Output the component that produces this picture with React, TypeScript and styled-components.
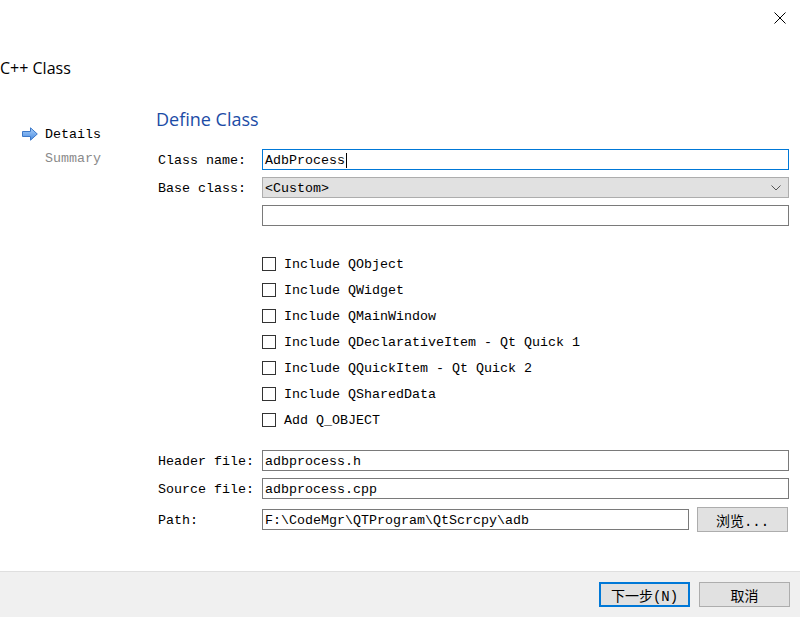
import React from "react";
import styled, { createGlobalStyle } from "styled-components";

const GlobalStyle = createGlobalStyle`
  html, body {
    margin: 0;
    padding: 0;
    background: #ffffff;
  }
  * {
    box-sizing: border-box;
  }
`;

const mono = `"Liberation Mono", "Noto Sans CJK SC", monospace`;
const ui = `"Open Sans", "Noto Sans", "Noto Sans CJK SC", sans-serif`;

const Window = styled.div`
  width: 800px;
  height: 617px;
  display: flex;
  flex-direction: column;
  background: #ffffff;
  overflow: hidden;
  font-family: ${mono};
  font-size: 13.33px;
  color: #000;
`;

const TopBar = styled.div`
  height: 36px;
  display: flex;
  justify-content: flex-end;
`;

const CloseButton = styled.div`
  width: 41px;
  height: 36px;
  display: flex;
  align-items: center;
  justify-content: center;
`;

const WizardTitle = styled.div`
  height: 64px;
  line-height: 64px;
  font-family: ${ui};
  font-size: 16px;
  color: #000;
`;

const Body = styled.div`
  flex: 1;
  display: flex;
`;

const Sidebar = styled.div`
  width: 156px;
  padding-top: 22px;
  display: flex;
  flex-direction: column;
`;

const NavItem = styled.div<{ $active?: boolean }>`
  height: 24px;
  display: flex;
  align-items: center;
  padding-left: ${(p) => (p.$active ? "22px" : "45px")};
  gap: 7px;
  color: ${(p) => (p.$active ? "#000" : "#8a8a8a")};
`;

const Page = styled.div`
  flex: 1;
  padding-top: 7px;
  padding-right: 11px;
  display: flex;
  flex-direction: column;
`;

const PageTitle = styled.div`
  height: 24px;
  line-height: 24px;
  font-family: ${ui};
  font-size: 18px;
  color: #1c4ca6;
`;

const FormGrid = styled.div<{ $top: number }>`
  margin-top: ${(p) => p.$top}px;
  display: grid;
  grid-template-columns: 106px 1fr;
  row-gap: 7px;
  align-items: center;
`;

const Label = styled.div`
  padding: 2px 0 0 2px;
  white-space: pre;
`;

const TextBox = styled.div<{ $focused?: boolean }>`
  height: 21px;
  display: flex;
  align-items: center;
  padding: 1px 0 0 2px;
  border: 1px solid ${(p) => (p.$focused ? "#0078d7" : "#7a7a7a")};
  background: #fff;
  white-space: pre;
`;

const Caret = styled.span`
  display: inline-block;
  width: 1px;
  height: 15px;
  background: #000;
  margin-left: 1px;
`;

const ComboBox = styled.div`
  height: 21px;
  display: flex;
  align-items: center;
  justify-content: space-between;
  padding: 1px 7px 0 2px;
  border: 1px solid #adadad;
  background: #e1e1e1;
`;

const PathRow = styled.div`
  display: flex;
  align-items: center;
  gap: 8px;
  margin-top: 1px;
  height: 25px;
  margin-right: 1px;
`;

const PathBox = styled(TextBox)`
  flex: 1;
`;

const Button = styled.div<{ $default?: boolean }>`
  width: 91px;
  height: 25px;
  display: flex;
  align-items: center;
  justify-content: center;
  background: #e1e1e1;
  border: ${(p) => (p.$default ? "2px solid #0078d7" : "1px solid #adadad")};
  font-size: 14px;
  white-space: pre;
`;

const CheckList = styled.div`
  margin-top: 25px;
  padding-left: 106px;
  display: flex;
  flex-direction: column;
`;

const CheckRow = styled.div`
  height: 26px;
  display: flex;
  align-items: center;
  gap: 8px;
  white-space: pre;
`;

const Box = styled.span`
  width: 14px;
  height: 14px;
  border: 1px solid #333;
  background: #fff;
`;

const Footer = styled.div`
  height: 46px;
  border-top: 1px solid #dfdfdf;
  background: #f0f0f0;
  display: flex;
  justify-content: flex-end;
  align-items: center;
  gap: 9px;
  padding-right: 10px;
`;

const checks = [
  "Include QObject",
  "Include QWidget",
  "Include QMainWindow",
  "Include QDeclarativeItem - Qt Quick 1",
  "Include QQuickItem - Qt Quick 2",
  "Include QSharedData",
  "Add Q_OBJECT",
];

const ArrowIcon = () => (
  <svg width="16" height="14" viewBox="0 0 16 14">
    <defs>
      <linearGradient id="arrowFill" x1="0" y1="0" x2="0" y2="1">
        <stop offset="0" stopColor="#a9d0fb" />
        <stop offset="1" stopColor="#4a8be0" />
      </linearGradient>
    </defs>
    <path
      d="M0.5 4.5 H8.5 V0.8 L15.3 7 L8.5 13.2 V9.5 H0.5 Z"
      fill="url(#arrowFill)"
      stroke="#3d78c8"
      strokeWidth="1"
      strokeLinejoin="round"
    />
  </svg>
);

export default function App() {
  return (
    <>
      <GlobalStyle />
      <Window>
        <TopBar>
          <CloseButton>
            <svg width="12" height="12" viewBox="0 0 12 12">
              <path d="M0.5 0.5 L11.5 11.5 M11.5 0.5 L0.5 11.5" stroke="#000" strokeWidth="1" />
            </svg>
          </CloseButton>
        </TopBar>
        <WizardTitle>C++ Class</WizardTitle>
        <Body>
          <Sidebar>
            <NavItem $active>
              <ArrowIcon />
              Details
            </NavItem>
            <NavItem>Summary</NavItem>
          </Sidebar>
          <Page>
            <PageTitle>Define Class</PageTitle>
            <FormGrid $top={18}>
              <Label>Class name:</Label>
              <TextBox $focused>
                AdbProcess
                <Caret />
              </TextBox>
              <Label>Base class:</Label>
              <ComboBox>
                <span>&lt;Custom&gt;</span>
                <svg width="10" height="6" viewBox="0 0 10 6">
                  <path d="M0.5 0.5 L5 5 L9.5 0.5" fill="none" stroke="#555" strokeWidth="1" />
                </svg>
              </ComboBox>
              <span />
              <TextBox />
            </FormGrid>
            <CheckList>
              {checks.map((c) => (
                <CheckRow key={c}>
                  <Box />
                  {c}
                </CheckRow>
              ))}
            </CheckList>
            <FormGrid $top={17}>
              <Label>Header file:</Label>
              <TextBox>adbprocess.h</TextBox>
              <Label>Source file:</Label>
              <TextBox>adbprocess.cpp</TextBox>
              <Label>Path:</Label>
              <PathRow>
                <PathBox>F:\CodeMgr\QTProgram\QtScrcpy\adb</PathBox>
                <Button>浏览...</Button>
              </PathRow>
            </FormGrid>
          </Page>
        </Body>
        <Footer>
          <Button $default>下一步(N)</Button>
          <Button>取消</Button>
        </Footer>
      </Window>
    </>
  );
}
